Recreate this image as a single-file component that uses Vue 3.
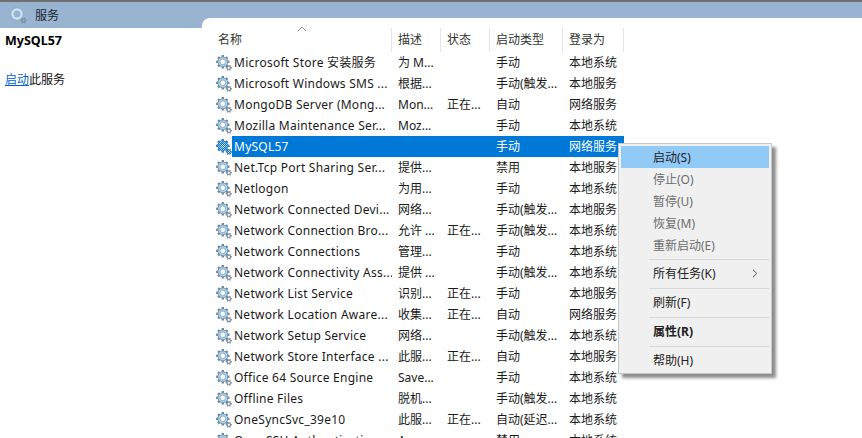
<script setup>
const rows = [
  ['Microsoft Store 安装服务', '为 M...', '', '手动', '本地系统'],
  ['Microsoft Windows SMS ...', '根据...', '', '手动(触发...', '本地服务'],
  ['MongoDB Server (Mong...', 'Mon...', '正在...', '自动', '网络服务'],
  ['Mozilla Maintenance Ser...', 'Moz...', '', '手动', '本地系统'],
  ['MySQL57', '', '', '手动', '网络服务'],
  ['Net.Tcp Port Sharing Ser...', '提供...', '', '禁用', '本地服务'],
  ['Netlogon', '为用...', '', '手动', '本地系统'],
  ['Network Connected Devi...', '网络...', '', '手动(触发...', '本地服务'],
  ['Network Connection Bro...', '允许 ...', '正在...', '手动(触发...', '本地系统'],
  ['Network Connections', '管理...', '', '手动', '本地系统'],
  ['Network Connectivity Ass...', '提供 ...', '', '手动(触发...', '本地系统'],
  ['Network List Service', '识别...', '正在...', '手动', '本地服务'],
  ['Network Location Aware...', '收集...', '正在...', '自动', '网络服务'],
  ['Network Setup Service', '网络...', '', '手动(触发...', '本地系统'],
  ['Network Store Interface ...', '此服...', '正在...', '自动', '本地服务'],
  ['Office 64 Source Engine', 'Save...', '', '手动', '本地系统'],
  ['Offline Files', '脱机...', '', '手动(触发...', '本地系统'],
  ['OneSyncSvc_39e10', '此服...', '正在...', '自动(延迟...', '本地系统'],
  ['OpenSSH Authentication ...', 'A...', '', '禁用', '本地系统'],
]
const headers = ['名称', '描述', '状态', '启动类型', '登录为']
const menu = [
  { label: '启动(S)', state: 'hot' },
  { label: '停止(O)', state: 'off' },
  { label: '暂停(U)', state: 'off' },
  { label: '恢复(M)', state: 'off' },
  { label: '重新启动(E)', state: 'off' },
  { sep: true, tight: true },
  { label: '所有任务(K)', arrow: true },
  { sep: true },
  { label: '刷新(F)' },
  { sep: true },
  { label: '属性(R)', state: 'bold' },
  { sep: true },
  { label: '帮助(H)' },
]
function cog(cx, cy, outer, inner, teeth) {
  const pts = []
  const step = (Math.PI * 2) / teeth
  for (let t = 0; t < teeth; t++) {
    const a = t * step
    const w = step * 0.22
    pts.push([a - w * 1.35, inner], [a - w, outer], [a + w, outer], [a + w * 1.35, inner])
  }
  return 'M' + pts.map(([a, r]) => `${(cx + r * Math.cos(a)).toFixed(2)} ${(cy + r * Math.sin(a)).toFixed(2)}`).join('L') + 'Z'
}
const bigCog = cog(6.8, 6.8, 6.8, 5.3, 8)
const smallCog = cog(12.8, 12.8, 3.2, 2.3, 6)
const titleCog = cog(13.5, 13.5, 3.2, 2.3, 6)
</script>

<template>
  <div class="window">
    <header class="titlebar">
      <svg class="title-icon" width="18" height="18" viewBox="0 0 18 18">
        <circle cx="7" cy="7" r="4.8" fill="none" stroke="#cbe4f3" stroke-width="2.6" />
        <circle cx="7" cy="7" r="6.3" fill="none" stroke="#7ea6c4" stroke-width=".7" />
        <path :d="titleCog" fill="#7f8fa0" />
        <circle cx="13.5" cy="13.5" r="1.1" fill="#99b4d1" />
      </svg>
      <span class="title-text">服务</span>
    </header>
    <div class="content">
      <aside class="side">
        <h1 class="side-title">MySQL57</h1>
        <p class="side-action"><a class="link">启动</a>此服务</p>
      </aside>
      <main class="panel">
        <div class="head">
          <div v-for="(h, i) in headers" :key="h" class="hcell" :class="{ first: i === 0 }">{{ h }}</div>
          <svg class="sort" width="10" height="6" viewBox="0 0 10 6">
            <path d="M1 5 5 1l4 4" fill="none" stroke="#9a9a9a" stroke-width="1" />
          </svg>
        </div>
        <div class="list">
          <div v-for="(r, i) in rows" :key="r[0]" class="row" :class="{ selected: i === 4 }">
            <svg class="gear" width="16" height="16" viewBox="0 0 16 16">
              <defs v-if="i === 4">
                <pattern id="dither" width="2" height="2" patternUnits="userSpaceOnUse">
                  <rect width="1" height="1" fill="#0078d7" />
                  <rect x="1" y="1" width="1" height="1" fill="#0078d7" />
                </pattern>
                <clipPath id="gearclip">
                  <path :d="bigCog" />
                  <path :d="smallCog" />
                </clipPath>
              </defs>
              <path :d="smallCog" fill="#8496a6" />
              <circle cx="12.8" cy="12.8" r="1.1" fill="#fff" />
              <path :d="bigCog" fill="#6f89a0" />
              <circle cx="6.8" cy="6.8" r="4.6" fill="#aad4ed" />
              <circle cx="6.8" cy="6.8" r="2.6" fill="#fff" />
              <circle cx="6.8" cy="6.8" r="2.8" fill="none" stroke="#6f94b0" stroke-width=".6" />
              <rect v-if="i === 4" width="16" height="16" fill="url(#dither)" clip-path="url(#gearclip)" />
            </svg>
            <div class="cells">
              <span class="cell name">{{ r[0] }}</span>
              <span class="cell">{{ r[1] }}</span>
              <span class="cell">{{ r[2] }}</span>
              <span class="cell">{{ r[3] }}</span>
              <span class="cell">{{ r[4] }}</span>
            </div>
          </div>
        </div>
      </main>
    </div>
    <nav class="menu">
      <template v-for="(m, i) in menu" :key="i">
        <div v-if="m.sep" class="sep" :class="{ tight: m.tight }"></div>
        <div v-else class="item" :class="m.state">
          <span>{{ m.label }}</span>
          <svg v-if="m.arrow" width="6" height="9" viewBox="0 0 6 9">
            <path d="M1 .8 4.8 4.5 1 8.2" fill="none" stroke="#555" stroke-width="1" />
          </svg>
        </div>
      </template>
    </nav>
  </div>
</template>

<style scoped>
.window {
  position: relative;
  width: 862px;
  height: 438px;
  overflow: hidden;
  background: #fff;
  color: #111;
  font: 12px/21px "Noto Sans", "Noto Sans CJK SC", sans-serif;
}
.titlebar {
  height: 26px;
  border-top: 2px solid #6f6f6f;
  background: #99b4d1;
  display: flex;
  align-items: center;
  padding-left: 10px;
  gap: 7px;
}
.title-icon {
  margin-top: 2px;
}
.title-text {
  color: #1c2530;
}
.content {
  display: flex;
}
.side {
  width: 202px;
  box-sizing: border-box;
  flex: none;
  padding: 3px 5px 0;
}
.side-title {
  margin: 0;
  font-size: 12.5px;
  line-height: 20px;
  font-weight: 700;
  color: #000;
}
.side-action {
  margin: 19px 0 0;
  line-height: 20px;
  color: #111;
}
.link {
  color: #0066cc;
  text-decoration: underline;
}
.panel {
  flex: 1;
  margin-top: -10px;
  background: #fff;
  border-top-left-radius: 8px;
  padding-left: 14px;
}
.head {
  position: relative;
  display: grid;
  grid-template-columns: 176px 49px 49px 73px 61px;
  width: 408px;
  height: 24px;
  margin-top: 10px;
}
.hcell {
  padding-left: 6px;
  border-right: 1px solid #e5e5e5;
  line-height: 23px;
  color: #333;
}
.hcell.first {
  padding-left: 2px;
}
.sort {
  position: absolute;
  left: 81px;
  top: -2px;
}
.list {
  display: flex;
  flex-direction: column;
}
.row {
  display: flex;
  height: 21px;
  align-items: center;
}
.gear {
  width: 16px;
  height: 16px;
  flex: none;
  margin-top: 1px;
}
.cells {
  display: grid;
  grid-template-columns: 160px 49px 49px 73px 61px;
  width: 392px;
  height: 21px;
  color: #1a1a1a;
}
.cell {
  padding-left: 6px;
  white-space: nowrap;
  overflow: hidden;
}
.cell.name {
  padding-left: 2px;
  letter-spacing: .25px;
}
.selected .cells {
  background: #0078d7;
  color: #fff;
}
.menu {
  position: absolute;
  left: 618px;
  top: 143px;
  width: 154px;
  box-sizing: border-box;
  padding: 2px;
  background: #f0f0f0;
  border: 1px solid #c8c8c8;
  box-shadow: 4px 4px 3px rgba(0, 0, 0, .45);
}
.item {
  height: 22px;
  padding: 0 11px 0 32px;
  display: flex;
  align-items: center;
  justify-content: space-between;
  color: #222;
}
.item.hot {
  background: #91c9f7;
}
.item.off {
  color: #6d6d6d;
}
.item.bold {
  font-weight: 700;
}
.sep {
  height: 1px;
  background: #d7d7d7;
  margin: 4px 0 2px 28px;
}
.sep.tight {
  margin-top: 3px;
}
</style>

<style>
html, body {
  margin: 0;
  background: #fff;
}
</style>
